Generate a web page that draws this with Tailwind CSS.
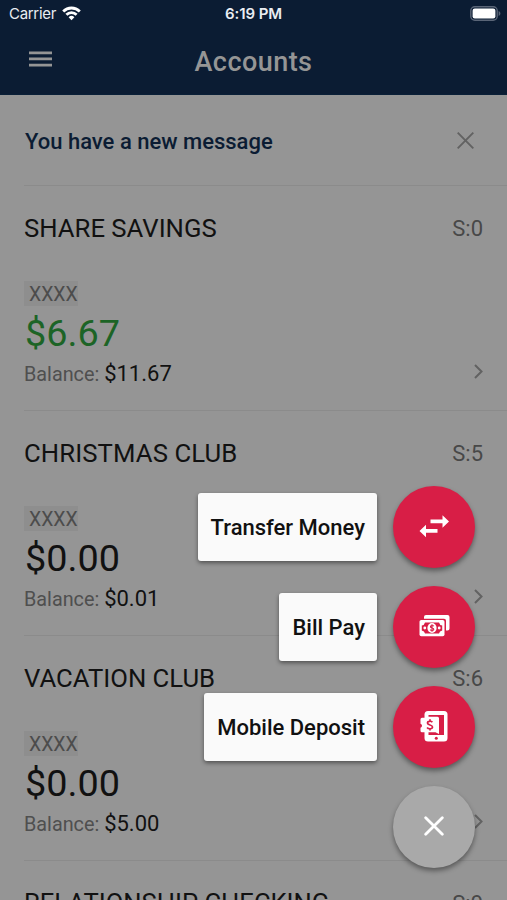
<!DOCTYPE html>
<html lang="en">
<head>
    <meta charset="UTF-8">
    <meta name="viewport" content="width=device-width, initial-scale=1.0">
    <title>Accounts</title>
    <script src="https://cdn.jsdelivr.net/npm/@tailwindcss/browser@4"></script>
</head>
<body class="bg-[#959595] font-[Roboto,sans-serif] text-[#111111]">

    <div class="relative w-full h-[900px] overflow-hidden">

        <!-- Status bar and header -->
        <header class="h-[95px] bg-[#0b1c33] border-b border-[#0a2038]">
            <div class="grid grid-cols-3 items-center h-7 pl-[9px] pr-[6px] text-[#e9edf2] font-[Inter,sans-serif]">
                <div class="flex items-center gap-[6px] text-[15px] tracking-[-0.3px]">
                    <span>Carrier</span>
                    <svg class="w-[19px] h-[15px] mb-[2px]" viewBox="0 0 19 15" fill="none" stroke="#ffffff" stroke-width="2.8">
                        <path d="M1.2 5.4a11.8 11.8 0 0 1 16.6 0" />
                        <path d="M4.4 8.8a7.2 7.2 0 0 1 10.2 0" />
                        <path d="M9.5 14.2L6.6 11.3a4.1 4.1 0 0 1 5.8 0z" fill="#ffffff" stroke="none" />
                    </svg>
                </div>
                <span class="text-center text-[15px] font-semibold tracking-[-0.1px] -ml-[3px]">6:19 PM</span>
                <svg class="w-[31px] h-[15px] mb-[2px] justify-self-end" viewBox="0 0 31 15">
                    <rect x="0.8" y="0.8" width="26.4" height="13.4" rx="4" fill="none" stroke="#5a6577" stroke-width="1.4" />
                    <rect x="2.6" y="2.6" width="22.8" height="9.8" rx="2.2" fill="#ffffff" />
                    <path d="M28.6 5v5c1.1-.4 1.8-1.4 1.8-2.5s-.7-2.1-1.8-2.5z" fill="#5a6577" />
                </svg>
            </div>
            <div class="grid grid-cols-3 items-center h-[66px] px-[29px]">
                <svg class="w-[23px] h-4 mb-1" viewBox="0 0 23 16" fill="#959595">
                    <path d="M0 .5h23v2.7H0zM0 6.6h23v2.7H0zM0 12.7h23v2.7H0z" />
                </svg>
                <h1 class="pt-[2px] text-center text-[27px] font-medium tracking-[0.45px] text-[#959595]">Accounts</h1>
            </div>
        </header>

        <!-- Message -->
        <div class="ml-6 h-[91px] flex items-center justify-between pr-[33px] border-b border-[#8b8b8b]">
            <p class="text-[22px] font-medium text-[#0b1c33] pt-[3px] pl-px">You have a new message</p>
            <svg class="w-[17px] h-[17px]" viewBox="0 0 17 17" fill="none" stroke="#626262" stroke-width="1.9">
                <path d="M.7.7l15.6 15.6M16.3.7L.7 16.3" />
            </svg>
        </div>

        <!-- Accounts -->
        <section class="ml-6 h-[225px] pt-[26px] pr-6 border-b border-[#8b8b8b]">
            <div class="flex justify-between items-center h-8">
                <h2 class="text-[25.7px]">SHARE SAVINGS</h2>
                <span class="text-[22px] text-[#484848]">S:0</span>
            </div>
            <div class="mt-[37px] w-[54px] h-[25px] pl-[5px] bg-[#8e8e8e] text-[19.4px] leading-[27px] text-[#4c4c4c]">XXXX</div>
            <div class="mt-[3px] h-12 pl-px text-[37.8px] leading-[48px] text-[#1c6426]">$6.67</div>
            <div class="flex justify-between items-center h-8">
                <p class="text-[19.8px] text-[#4f4f4f]">Balance: <span class="text-[22px] text-[#111111]">$11.67</span></p>
                <svg class="w-[9px] h-[15px] mb-1" viewBox="0 0 9 15" fill="none" stroke="#626262" stroke-width="2">
                    <path d="M1 1l6.5 6.5L1 14" />
                </svg>
            </div>
        </section>

        <section class="ml-6 h-[225px] pt-[26px] pr-6 border-b border-[#8b8b8b]">
            <div class="flex justify-between items-center h-8">
                <h2 class="text-[25.7px] tracking-[0.1px]">CHRISTMAS CLUB</h2>
                <span class="text-[22px] text-[#484848]">S:5</span>
            </div>
            <div class="mt-[37px] w-[54px] h-[25px] pl-[5px] bg-[#8e8e8e] text-[19.4px] leading-[27px] text-[#4c4c4c]">XXXX</div>
            <div class="mt-[3px] h-12 pl-px text-[37.8px] leading-[48px]">$0.00</div>
            <div class="flex justify-between items-center h-8">
                <p class="text-[19.8px] text-[#4f4f4f]">Balance: <span class="text-[22px] text-[#111111]">$0.01</span></p>
                <svg class="w-[9px] h-[15px] mb-1" viewBox="0 0 9 15" fill="none" stroke="#626262" stroke-width="2">
                    <path d="M1 1l6.5 6.5L1 14" />
                </svg>
            </div>
        </section>

        <section class="ml-6 h-[225px] pt-[26px] pr-6 border-b border-[#8b8b8b]">
            <div class="flex justify-between items-center h-8">
                <h2 class="text-[25.7px]">VACATION CLUB</h2>
                <span class="text-[22px] text-[#484848]">S:6</span>
            </div>
            <div class="mt-[37px] w-[54px] h-[25px] pl-[5px] bg-[#8e8e8e] text-[19.4px] leading-[27px] text-[#4c4c4c]">XXXX</div>
            <div class="mt-[3px] h-12 pl-px text-[37.8px] leading-[48px]">$0.00</div>
            <div class="flex justify-between items-center h-8">
                <p class="text-[19.8px] text-[#4f4f4f]">Balance: <span class="text-[22px] text-[#111111]">$5.00</span></p>
                <svg class="w-[9px] h-[15px] mb-1" viewBox="0 0 9 15" fill="none" stroke="#626262" stroke-width="2">
                    <path d="M1 1l6.5 6.5L1 14" />
                </svg>
            </div>
        </section>

        <section class="ml-6 pt-[26px] pr-6">
            <div class="flex justify-between items-center h-8">
                <h2 class="text-[25.6px]">RELATIONSHIP CHECKING</h2>
                <span class="text-[22px] text-[#484848]">S:9</span>
            </div>
        </section>

        <!-- Floating actions -->
        <div class="absolute top-[486px] right-8 flex flex-col items-end gap-[18px]">
            <div class="flex items-center gap-4">
                <span class="h-[68px] pl-[13px] pr-3 rounded-[3px] bg-[#fafafa] shadow-[0_2px_4px_rgba(0,0,0,0.45)] text-[22px] font-medium leading-[69px]">Transfer Money</span>
                <button class="w-[82px] h-[82px] rounded-full bg-[#d81e46] shadow-[0_3px_5px_rgba(0,0,0,0.4)] flex items-center justify-center">
                    <svg class="w-[30px] h-[24px]" viewBox="0 0 30 24" fill="#ffffff">
                        <path d="M11.5 4.500h12V.3L30 6.500l-6.500 6.200V8.300h-12z" />
                        <path d="M18.500 14H7V9.800L.5 16 7 22.200v-4.400h11.500z" />
                    </svg>
                </button>
            </div>
            <div class="flex items-center gap-4">
                <span class="h-[68px] pl-[13px] pr-3 rounded-[3px] bg-[#fafafa] shadow-[0_2px_4px_rgba(0,0,0,0.45)] text-[22px] font-medium leading-[69px]">Bill Pay</span>
                <button class="w-[82px] h-[82px] rounded-full bg-[#d81e46] shadow-[0_3px_5px_rgba(0,0,0,0.4)] flex items-center justify-center">
                    <svg class="w-[31px] h-[22px] mb-[2px]" viewBox="0 0 31 22">
                        <path d="M5 3.700V2Q5 0 7 0h21.500q2 0 2 2v11.500q0 2-2 2H27V5.700q0-2-2-2z" fill="#ffffff" />
                        <rect x="0.5" y="5" width="25" height="16.2" rx="1.8" fill="#ffffff" />
                        <path d="M6 7.500h14q.5 2.500 3.200 3v5q-2.700.5-3.200 3H6q-.5-2.500-3.200-3v-5Q5.500 10 6 7.500z" fill="#d81e46" />
                        <circle cx="5.8" cy="13" r="1.4" fill="#ffffff" />
                        <circle cx="20.2" cy="13" r="1.4" fill="#ffffff" />
                        <ellipse cx="13" cy="13" rx="4.6" ry="5" fill="#ffffff" />
                        <path d="M14.800 11.200c-.8-1-3.500-.8-3.300.6.200 1.500 3.300.8 3.300 2.400 0 1.400-2.800 1.500-3.600.4M13 9.300v7.400" fill="none" stroke="#d81e46" stroke-width="1.1" />
                    </svg>
                </button>
            </div>
            <div class="flex items-center gap-4">
                <span class="h-[68px] pl-[13px] pr-3 rounded-[3px] bg-[#fafafa] shadow-[0_2px_4px_rgba(0,0,0,0.45)] text-[22px] font-medium leading-[69px]">Mobile Deposit</span>
                <button class="w-[82px] h-[82px] rounded-full bg-[#d81e46] shadow-[0_3px_5px_rgba(0,0,0,0.4)] flex items-center justify-center">
                    <svg class="w-[28px] h-[31px] mb-[2px]" viewBox="0 0 28 31">
                        <rect x="4.5" y="0" width="23" height="30.5" rx="3.5" fill="#ffffff" />
                        <path d="M8.500 4H24v20H8.500z" fill="#d81e46" />
                        <path d="M2 6.800h3.500q1.300 0 1.500-1h10.500q1.500 0 1.500 1.500V23l-3.500-1.800H2q-1.500 0-1.500-1.500v-3q1.500-.5 1.500-2t-1.500-2V8.300Q.5 6.800 2 6.800z" fill="#ffffff" />
                        <path d="M12.300 11.300c-1-1.600-5-1.300-4.800.8.200 2.300 5 1.400 5 3.900 0 2.200-4.200 2.300-5.400.5M10 8.300v2M10 17.500v2" fill="none" stroke="#d81e46" stroke-width="1.7" />
                        <circle cx="16.3" cy="27.3" r="1.5" fill="#d81e46" />
                    </svg>
                </button>
            </div>
            <button class="w-[82px] h-[82px] rounded-full bg-[#a9a9a9] shadow-[0_3px_5px_rgba(0,0,0,0.4)] flex items-center justify-center">
                <svg class="w-[20px] h-[20px] mb-[2px]" viewBox="0 0 20 20" fill="none" stroke="#ffffff" stroke-width="2.8" stroke-linecap="round">
                    <path d="M1.700 1.700l16.600 16.600M18.300 1.700L1.700 18.300" />
                </svg>
            </button>
        </div>
    </div>

</body>
</html>
